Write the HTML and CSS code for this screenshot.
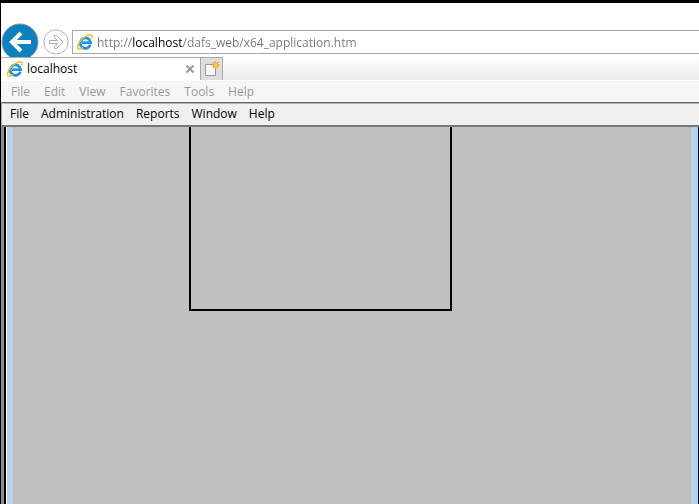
FILE: index.html
```
<!DOCTYPE html>
<html lang="en">
<head>
<meta charset="utf-8">
<title>localhost</title>
<link rel="stylesheet" href="styles.css">
</head>
<body>
<svg class="defs" aria-hidden="true">
  <symbol id="browser-logo" viewBox="0 0 16 16">
    <path d="M13.4 10.6A5.200 5.200 0 1 1 13.600 8.700H5" fill="none" stroke="#2496d8" stroke-width="2.800"/>
    <path d="M4.800 7.300h7" stroke="#65c3ee" stroke-width="1"/>
    <path d="M14.600 4.500C16.500-.3 12-.2 7 3.500 2.500 7-.8 12.500 1 14.600c1 1 3.200.2 5-1" fill="none" stroke="#edbd2b" stroke-width="1.500"/>
  </symbol>
</svg>
<div class="window">
  <header class="toolbar">
    <button class="nav back" aria-label="Back">
      <svg viewBox="0 0 38 38"><circle cx="19" cy="19" r="18" fill="#0b82bd" stroke="#8795a0"/><path d="M30 19H12M20 10l-9 9 9 9" fill="none" stroke="#fff" stroke-width="4"/></svg>
    </button>
    <button class="nav forward" aria-label="Forward">
      <svg viewBox="0 0 26 26"><circle cx="13" cy="13" r="12.200" fill="#fff" stroke="#b4b4b4"/><path d="M6.500 11.500h8L11.500 8.500V6.500h2l6.500 6.500-6.500 6.500h-2v-2l3-3h-8z" fill="#fff" stroke="#aaa"/></svg>
    </button>
    <label class="address">
      <svg class="logo"><use href="#browser-logo"/></svg>
      <input class="url" type="text" aria-label="Address" value="http://localhost/dafs_web/x64_application.htm">
    </label>
  </header>
  <div class="tabs">
    <div class="tab">
      <svg class="logo"><use href="#browser-logo"/></svg>
      <span class="title">localhost</span>
      <button class="close" aria-label="Close tab"><svg viewBox="0 0 8 8"><path d="M.5.5l7 7M7.500.5l-7 7" stroke="#999" stroke-width="2"/></svg></button>
    </div>
    <button class="new-tab" aria-label="New tab">
      <svg viewBox="0 0 16 16"><path d="M1.500 3.500h10v11h-10z" fill="#fafafa" stroke="#999"/><path d="M11.500 0v8M7.500 4h8M8.700 1.200l5.600 5.600M14.300 1.200L8.700 6.800" stroke="#f3a02c" stroke-width="1.300"/><circle cx="11.500" cy="4" r="2" fill="#ffc65a"/></svg>
    </button>
  </div>
  <nav class="menu browser-menu" aria-label="Browser">
    <button>File</button><button>Edit</button><button>View</button><button>Favorites</button><button>Tools</button><button>Help</button>
  </nav>
  <nav class="menu app-menu" aria-label="Application">
    <button>File</button><button>Administration</button><button>Reports</button><button>Window</button><button>Help</button>
  </nav>
  <main class="workspace">
    <div class="edge left"></div>
    <div class="canvas"><div class="frame"></div></div>
    <div class="edge right"></div>
  </main>
</div>
</body>
</html>
```
FILE: styles.css
```
* { box-sizing: border-box; }
body {
  margin: 0;
  font: 12px/16px "Open Sans", "Noto Sans", sans-serif;
  color: #000;
}
button, input {
  margin: 0;
  padding: 0;
  border: 0;
  background: none;
  font: inherit;
  color: inherit;
}
svg { display: block; }
.defs { position: absolute; width: 0; height: 0; }
.window {
  display: flex;
  flex-direction: column;
  min-height: 100vh;
  border-top: 3px solid #000;
  border-left: 1px solid #000;
  background: #fff;
}
.toolbar {
  display: flex;
  align-items: center;
  height: 54px;
  padding-top: 24px;
}
.nav { flex: none; }
.back { width: 38px; height: 38px; }
.forward { width: 26px; height: 26px; margin: 0 3px 0 4px; }
.address {
  display: flex;
  flex: 1;
  align-items: center;
  gap: 4px;
  height: 24px;
  padding-left: 4px;
  border: 1px solid #a9a9a9;
  border-right: 0;
}
.logo { flex: none; width: 16px; height: 16px; }
/* The host part of the address is darker than the rest. */
.url {
  flex: 1;
  min-width: 0;
  height: 18px;
  color: transparent;
  background: linear-gradient(90deg, #777 35px, #000 35px, #000 86px, #777 86px);
  background-clip: text;
  -webkit-background-clip: text;
}
.tabs {
  display: flex;
  position: relative;
  height: 24px;
  background: linear-gradient(#fff, #ebebeb);
  border-bottom: 1px solid #fff;
}
.tab {
  display: flex;
  align-items: center;
  gap: 4px;
  width: 199px;
  padding: 0 6px;
  border-top: 1px solid #aaa;
  background: #fff;
}
.title { flex: 1; }
.close svg { width: 8px; height: 8px; }
.new-tab {
  width: 23px;
  padding: 0 3px;
  border: 1px solid #aaa;
  border-bottom: 0;
  background: #dedede;
}
.new-tab svg { width: 16px; height: 16px; }
.menu { display: flex; }
.browser-menu {
  gap: 14px;
  height: 21px;
  padding: 0 10px;
  color: #999;
  background: #f6f6f6;
}
.app-menu {
  gap: 12px;
  height: 25px;
  padding: 0 8px;
  border-top: 1px solid #666;
  border-left: 1px solid #aaa;
  border-bottom: 2px solid #777;
  background: #f0f0f0;
  box-shadow: inset 0 1px #b4b4b4;
}
.workspace {
  display: flex;
  flex: 1;
  border-left: 3px solid #938b8d;
  background: #c0c0c0;
}
.edge { flex: none; }
.left {
  width: 9px;
  border-left: 2px solid #000;
  background: linear-gradient(90deg, #fff 1px, #bcd0e8 1px);
}
.right {
  width: 8px;
  border-right: 1px solid #000;
  background: linear-gradient(90deg, #bcd0e8 4px, #a5d8f8 4px);
}
.canvas { flex: 1; }
.frame {
  width: 263px;
  height: 184px;
  margin-left: 176px;
  border: 2px solid #000;
  border-top: 0;
}
```
